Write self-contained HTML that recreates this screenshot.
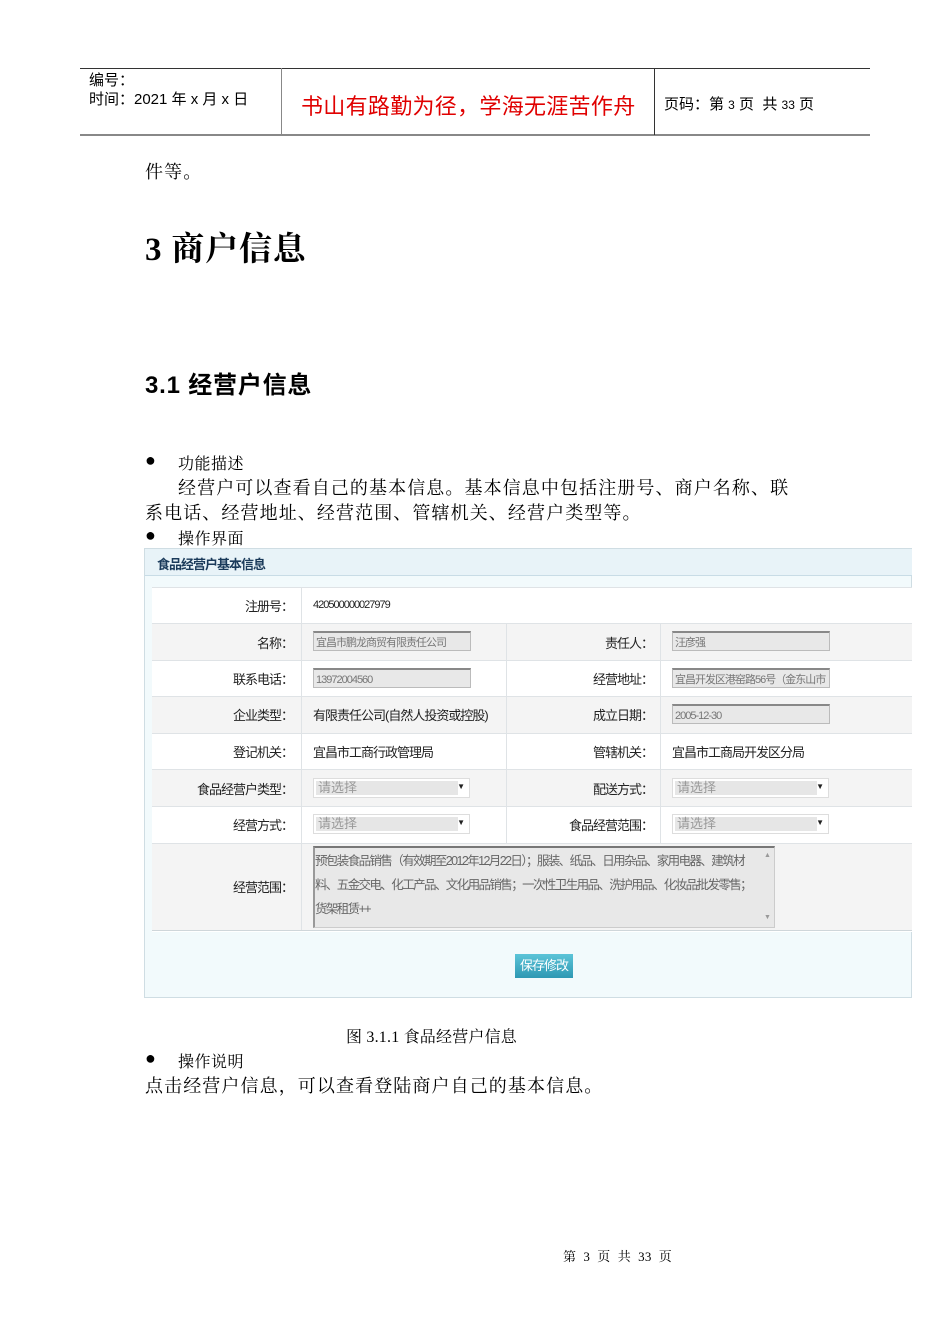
<!DOCTYPE html>
<html><head><meta charset="utf-8"><style>
body{margin:0;width:950px;height:1344px;background:#fff;position:relative;font-family:"Liberation Serif","Noto Serif CJK SC",serif;overflow:hidden}
.a{position:absolute;white-space:nowrap}
.s{font-family:"Liberation Sans","Noto Sans CJK SC",sans-serif}
.r{position:absolute;left:152px;width:760px;border-bottom:1px solid #dfe3e6}
.c{position:absolute;top:0;bottom:0;border-left:1px solid #dfe3e6}
.l{position:absolute;font-family:"Liberation Sans","Noto Sans CJK SC",sans-serif;font-size:13px;color:#222;text-align:right;letter-spacing:-1px}
.v{position:absolute;font-family:"Liberation Sans","Noto Sans CJK SC",sans-serif;font-size:13px;color:#222;letter-spacing:-1px}
.in{position:absolute;height:20px;background:#e8e8e8;border:1px solid #bbb;border-top:2px solid #888;font-family:"Liberation Sans","Noto Sans CJK SC",sans-serif;font-size:11px;color:#777;line-height:20px;padding-left:2px;letter-spacing:-1px;overflow:hidden;box-sizing:border-box}
.sel{position:absolute;height:20px;width:157px;background:#fff;border:1px solid #ddd;box-sizing:border-box}
.sel span{position:absolute;left:2px;top:2px;width:140px;height:14px;background:#e6e6e6;font-family:"Liberation Sans","Noto Sans CJK SC",sans-serif;font-size:13px;color:#999;line-height:14px;padding-left:2px}
.sel b{position:absolute;right:4px;top:3px;font-size:8px;color:#222}
.t{font-size:18px;letter-spacing:1.1px}
</style></head><body>
<div class="a" style="left:80px;top:68px;width:790px;border-top:1px solid #333"></div>
<div class="a" style="left:80px;top:134px;width:790px;border-top:2px solid #888"></div>
<div class="a" style="left:281px;top:68px;height:67px;border-left:1px solid #888"></div>
<div class="a" style="left:654px;top:68px;height:67px;border-left:1px solid #333"></div>
<div class="a s" style="left:89px;top:69px;font-size:15px">编号：</div>
<div class="a s" style="left:89px;top:88px;font-size:15px">时间：2021 年 x 月 x 日</div>
<div class="a s" style="left:301px;top:89px;font-size:22px;color:#e00000;letter-spacing:0.3px">书山有路勤为径，学海无涯苦作舟</div>
<div class="a s" style="left:664px;top:93px;font-size:15px">页码：第 <span style="font-size:12px">3</span> 页&nbsp; 共 <span style="font-size:12px">33</span> 页</div>

<div class="a t" style="left:145px;top:158px">件等。</div>
<div class="a" style="left:145px;top:223px;font-size:33px;font-weight:bold;letter-spacing:0.8px">3 商户信息</div>
<div class="a s" style="left:145px;top:365px;font-size:24px;font-weight:bold;letter-spacing:0.8px">3.1 经营户信息</div>
<div class="a" style="left:145px;top:450px;font-size:18px">●</div>
<div class="a" style="left:178px;top:451px;font-size:16px;letter-spacing:0.5px">功能描述</div>
<div class="a t" style="left:178px;top:474px">经营户可以查看自己的基本信息。基本信息中包括注册号、商户名称、联</div>
<div class="a t" style="left:145px;top:499px">系电话、经营地址、经营范围、管辖机关、经营户类型等。</div>
<div class="a" style="left:145px;top:525px;font-size:18px">●</div>
<div class="a" style="left:178px;top:526px;font-size:16px;letter-spacing:0.5px">操作界面</div>

<div class="a" style="left:144px;top:548px;width:768px;height:450px;background:#f2fafc;border:1px solid #cfdde3;box-sizing:border-box"></div>
<div class="a" style="left:145px;top:549px;width:767px;height:26px;background:#e8f3f8;border-bottom:1px solid #c8dce6"></div>
<div class="a s" style="left:157px;top:554px;font-size:13px;font-weight:bold;color:#1a3a5a;letter-spacing:-1px">食品经营户基本信息</div>
<div class="a" style="left:152px;top:587px;width:760px;height:344px;background:#fff;border-top:1px solid #dfe3e6"></div>

<div class="r" style="top:588px;height:35px;background:#fff"><div class="c" style="left:149px"></div></div>
<div class="r" style="top:624px;height:36px;background:#f4f4f4"><div class="c" style="left:149px"></div><div class="c" style="left:354px"></div><div class="c" style="left:508px"></div></div>
<div class="r" style="top:661px;height:35px;background:#fff"><div class="c" style="left:149px"></div><div class="c" style="left:354px"></div><div class="c" style="left:508px"></div></div>
<div class="r" style="top:697px;height:36px;background:#f4f4f4"><div class="c" style="left:149px"></div><div class="c" style="left:354px"></div><div class="c" style="left:508px"></div></div>
<div class="r" style="top:734px;height:35px;background:#fff"><div class="c" style="left:149px"></div><div class="c" style="left:354px"></div><div class="c" style="left:508px"></div></div>
<div class="r" style="top:770px;height:36px;background:#f4f4f4"><div class="c" style="left:149px"></div><div class="c" style="left:354px"></div><div class="c" style="left:508px"></div></div>
<div class="r" style="top:807px;height:36px;background:#fff"><div class="c" style="left:149px"></div><div class="c" style="left:354px"></div><div class="c" style="left:508px"></div></div>
<div class="r" style="top:844px;height:86px;background:#f4f4f4;border-bottom:1px solid #cfd6da"><div class="c" style="left:149px"></div></div>

<div class="l" style="left:152px;width:141px;top:596px">注册号：</div>
<div class="v" style="left:313px;top:599px;font-size:11px">420500000027979</div>
<div class="l" style="left:152px;width:141px;top:633px">名称：</div>
<div class="in" style="left:313px;top:631px;width:158px">宜昌市鹏龙商贸有限责任公司</div>
<div class="l" style="left:506px;width:147px;top:633px">责任人：</div>
<div class="in" style="left:672px;top:631px;width:158px">汪彦强</div>
<div class="l" style="left:152px;width:141px;top:669px">联系电话：</div>
<div class="in" style="left:313px;top:668px;width:158px">13972004560</div>
<div class="l" style="left:506px;width:147px;top:669px">经营地址：</div>
<div class="in" style="left:672px;top:668px;width:158px">宜昌开发区港窑路56号（金东山市场</div>
<div class="l" style="left:152px;width:141px;top:705px">企业类型：</div>
<div class="v" style="left:313px;top:705px">有限责任公司(自然人投资或控股)</div>
<div class="l" style="left:506px;width:147px;top:705px">成立日期：</div>
<div class="in" style="left:672px;top:704px;width:158px">2005-12-30</div>
<div class="l" style="left:152px;width:141px;top:742px">登记机关：</div>
<div class="v" style="left:313px;top:742px">宜昌市工商行政管理局</div>
<div class="l" style="left:506px;width:147px;top:742px">管辖机关：</div>
<div class="v" style="left:672px;top:742px">宜昌市工商局开发区分局</div>
<div class="l" style="left:152px;width:141px;top:779px">食品经营户类型：</div>
<div class="sel" style="left:313px;top:778px"><span>请选择</span><b>▼</b></div>
<div class="l" style="left:506px;width:147px;top:779px">配送方式：</div>
<div class="sel" style="left:672px;top:778px"><span>请选择</span><b>▼</b></div>
<div class="l" style="left:152px;width:141px;top:815px">经营方式：</div>
<div class="sel" style="left:313px;top:814px"><span>请选择</span><b>▼</b></div>
<div class="l" style="left:506px;width:147px;top:815px">食品经营范围：</div>
<div class="sel" style="left:672px;top:814px"><span>请选择</span><b>▼</b></div>
<div class="l" style="left:152px;width:141px;top:877px">经营范围：</div>
<div class="a" style="left:313px;top:846px;width:462px;height:82px;background:#e8e8e8;border:1px solid #ccc;border-top:2px solid #777;border-left:2px solid #999;box-sizing:border-box"></div>
<div class="a s" style="left:315px;top:849px;width:445px;white-space:normal;font-size:12.5px;line-height:24px;color:#666;letter-spacing:-1.6px">预包装食品销售（有效期至2012年12月22日）；服装、纸品、日用杂品、家用电器、建筑材<br>料、五金交电、化工产品、文化用品销售；一次性卫生用品、洗护用品、化妆品批发零售；<br>货架租赁++</div>
<div class="a" style="left:764px;top:851px;font-size:7px;color:#999">▲</div>
<div class="a" style="left:764px;top:913px;font-size:7px;color:#999">▼</div>

<div class="a s" style="left:515px;top:954px;width:58px;height:24px;background:linear-gradient(#5cc4d8,#2e98b3);color:#fff;font-size:13px;line-height:24px;text-align:center;letter-spacing:-1px">保存修改</div>

<div class="a" style="left:346px;top:1024px;font-size:16px;letter-spacing:0.2px">图 3.1.1 食品经营户信息</div>
<div class="a" style="left:145px;top:1048px;font-size:18px">●</div>
<div class="a" style="left:178px;top:1049px;font-size:16px;letter-spacing:0.5px">操作说明</div>
<div class="a t" style="left:145px;top:1072px">点击经营户信息，可以查看登陆商户自己的基本信息。</div>
<div class="a" style="left:563px;top:1246px;font-size:13px;letter-spacing:0.3px">第 &nbsp;3 &nbsp;页 &nbsp;共 &nbsp;33 &nbsp;页</div>
</body></html>
